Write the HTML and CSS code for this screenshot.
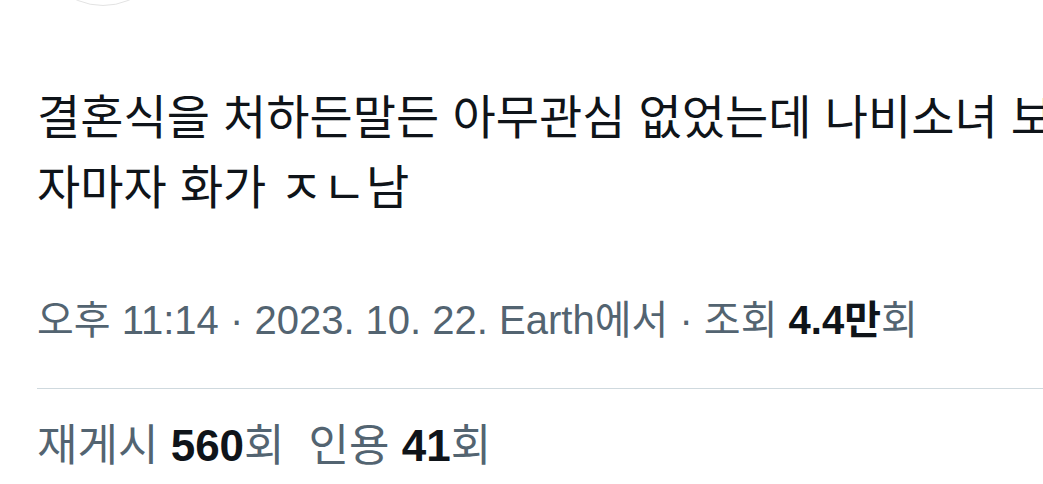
FILE: index.html
```html
<!DOCTYPE html>
<html lang="ko">
<head>
  <meta charset="UTF-8" />
  <meta name="viewport" content="width=device-width, initial-scale=1.0" />
  <title>게시물</title>
  <link rel="stylesheet" href="styles.css">
</head>
<body>
  <div class="tweet">
    <div class="avatar"></div>
    <p class="tweet-text">결혼식을 처하든말든 아무관심 없었는데 나비소녀 보<br>자마자 화가 ㅈㄴ남</p>
    <div class="tweet-meta">
      <span>오후 11:14</span> · <span>2023. 10. 22.</span> <span>Earth에서</span> · <span>조회 <b>4.4만</b>회</span>
    </div>
    <div class="tweet-stats">
      <span class="stat">재게시 <b>560</b>회</span>
      <span class="stat">인용 <b>41</b>회</span>
    </div>
  </div>
</body>
</html>
```

FILE: styles.css
```css
html, body {
  margin: 0;
  background-color: #ffffff;
  overflow: hidden;
}

body {
  font-family: 'Liberation Sans', 'Noto Sans CJK KR', sans-serif;
  color: #0f1419;
}

.tweet {
  padding-left: 37px;
}

.avatar {
  box-sizing: border-box;
  width: 132px;
  height: 132px;
  margin-top: -126px;
  border-radius: 50%;
  border: 1px solid #e3e3e3;
  background-color: #ffffff;
}

.tweet-text {
  margin: 73px 0 0;
  font-family: 'Noto Sans CJK KR', sans-serif;
  font-size: 47px;
  line-height: 70px;
  white-space: nowrap;
}

.tweet-meta {
  margin-top: 76px;
  padding-bottom: 43px;
  border-bottom: 1px solid #cfd9de;
  font-size: 40px;
  line-height: 50px;
  color: #536471;
  white-space: nowrap;
}

.tweet-meta b,
.tweet-stats b {
  color: #0f1419;
  font-weight: 700;
}

.tweet-stats {
  display: flex;
  gap: 24px;
  padding-top: 30px;
  font-size: 44px;
  line-height: 54px;
  color: #536471;
  white-space: nowrap;
}
```
